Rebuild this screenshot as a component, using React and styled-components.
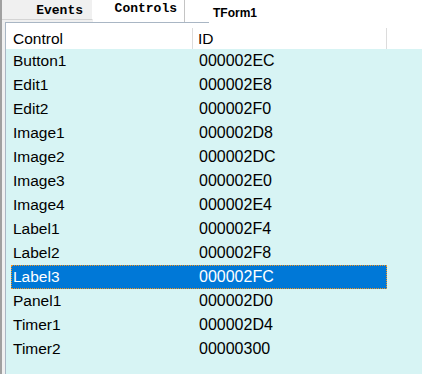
import React from "react";
import styled, { createGlobalStyle } from "styled-components";

const Global = createGlobalStyle`
  html, body { margin: 0; padding: 0; background: #ffffff; }
  body { font-family: "Liberation Sans", Arial, sans-serif; }
`;

const Window = styled.div`
  width: 422px;
  height: 374px;
  overflow: hidden;
  box-sizing: border-box;
  display: flex;
  flex-direction: column;
  background: #ffffff;
  border-left: 2px solid #a0a0a0;
`;

const TabStrip = styled.div`
  display: flex;
  align-items: flex-start;
  height: 22px;
  flex: none;
  background: #f0f0f0;
`;

const Tab = styled.div`
  box-sizing: border-box;
  width: ${(p) => (p.$active ? "92px" : "91px")};
  height: ${(p) => (p.$active ? "22px" : "20px")};
  display: flex;
  justify-content: flex-end;
  align-items: flex-start;
  padding-right: ${(p) => (p.$active ? "7px" : "9px")};
  padding-top: ${(p) => (p.$active ? "2px" : "4px")};
  background: ${(p) => (p.$active ? "#ffffff" : "#f0f0f0")};
  border-right: 1px solid ${(p) => (p.$active ? "#c4c4c4" : "#ffffff")};
  border-bottom: ${(p) => (p.$active ? "none" : "1px solid #d4d4d4")};
  font-family: "Liberation Mono", "Courier New", monospace;
  font-weight: bold;
  font-size: 13px;
  line-height: 13px;
  color: #000000;
`;

const Title = styled.div`
  flex: 1;
  align-self: stretch;
  background: #ffffff;
  padding-left: 28px;
  padding-top: 7px;
  font-family: "Liberation Sans", Arial, sans-serif;
  font-weight: bold;
  font-size: 12px;
  line-height: 13px;
  color: #000000;
`;

const Body = styled.div`
  flex: 1;
  display: flex;
  padding-left: 3px;
  background: #f0f0f0;
  min-height: 0;
`;

const List = styled.div`
  flex: 1;
  display: flex;
  flex-direction: column;
  background: #ffffff;
  border-left: 1px solid #a9b6c4;
`;

const TopEdge = styled.div`
  width: 203px;
  height: 1px;
  flex: none;
  background: #a9b6c4;
`;

const Header = styled.div`
  display: flex;
  align-items: flex-end;
  height: 26px;
  flex: none;
  background: #ffffff;
`;

const HeaderCell = styled.div`
  box-sizing: border-box;
  width: ${(p) => p.$w}px;
  height: 21px;
  padding-left: ${(p) => p.$pad}px;
  border-right: 1px solid #dcdcdc;
  font-size: ${(p) => p.$size}px;
  line-height: 21px;
  color: #000000;
  white-space: nowrap;
`;

const Rows = styled.div`
  flex: 1;
  background: #d7f4f4;
`;

const Row = styled.div`
  box-sizing: border-box;
  display: flex;
  align-items: center;
  height: 24px;
  width: 376px;
  margin-left: 5px;
  border: 1px ${(p) => (p.$selected ? "dotted #f7931e" : "solid transparent")};
  background: ${(p) => (p.$selected ? "#0078d7" : "transparent")};
  color: ${(p) => (p.$selected ? "#ffffff" : "#000000")};
`;

const Cell = styled.div`
  box-sizing: border-box;
  width: ${(p) => (p.$w ? `${p.$w}px` : "auto")};
  flex: ${(p) => (p.$w ? "none" : "1")};
  padding-left: 1px;
  font-size: ${(p) => p.$size}px;
  line-height: 22px;
  white-space: nowrap;
`;

const data = [
  ["Button1", "000002EC"],
  ["Edit1", "000002E8"],
  ["Edit2", "000002F0"],
  ["Image1", "000002D8"],
  ["Image2", "000002DC"],
  ["Image3", "000002E0"],
  ["Image4", "000002E4"],
  ["Label1", "000002F4"],
  ["Label2", "000002F8"],
  ["Label3", "000002FC"],
  ["Panel1", "000002D0"],
  ["Timer1", "000002D4"],
  ["Timer2", "00000300"],
];

export default function App() {
  return (
    <>
      <Global />
      <Window>
        <TabStrip>
          <Tab>Events</Tab>
          <Tab $active>Controls</Tab>
          <Title>TForm1</Title>
        </TabStrip>
        <Body>
          <List>
            <TopEdge />
            <Header>
              <HeaderCell $w={187} $pad={7} $size={15.5}>Control</HeaderCell>
              <HeaderCell $w={194} $pad={5} $size={15.5}>ID</HeaderCell>
            </Header>
            <Rows>
              {data.map(([name, id]) => (
                <Row key={name} $selected={name === "Label3"}>
                  <Cell $w={186} $size={15.5}>{name}</Cell>
                  <Cell $size={16}>{id}</Cell>
                </Row>
              ))}
            </Rows>
          </List>
        </Body>
      </Window>
    </>
  );
}
